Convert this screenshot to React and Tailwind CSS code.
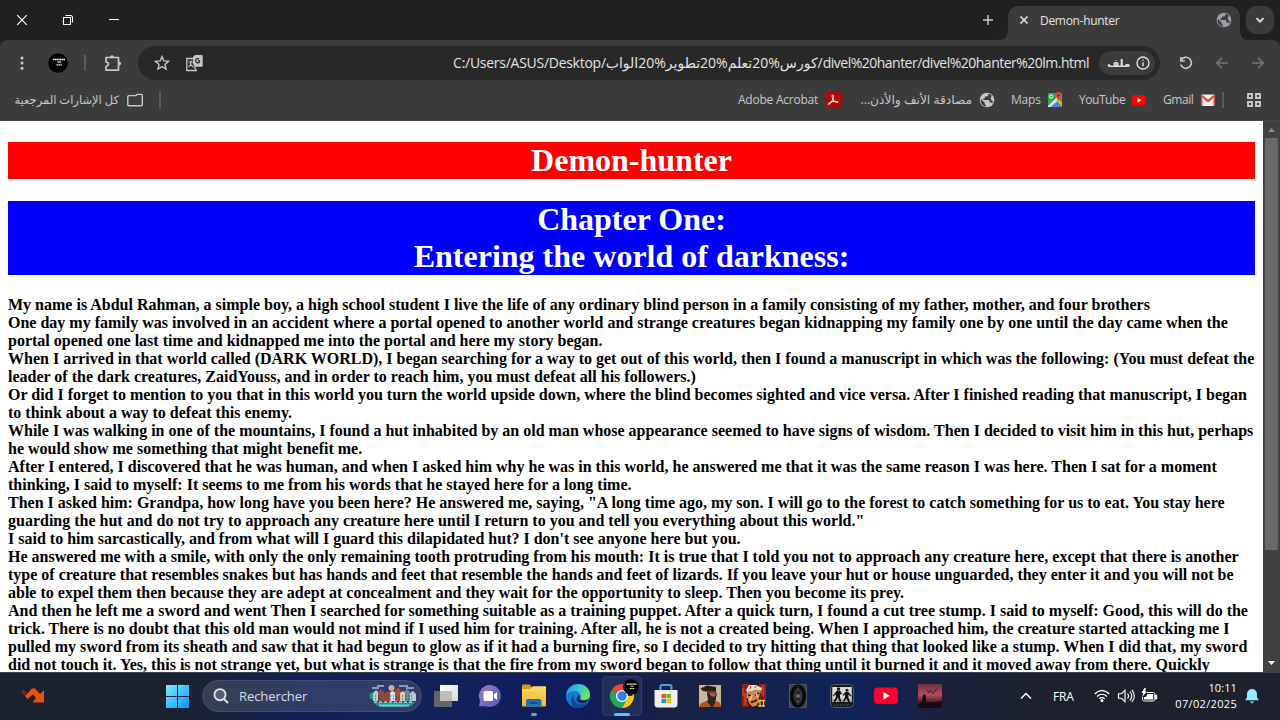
import React from "react";

const STORY = [
  "My name is Abdul Rahman, a simple boy, a high school student I live the life of any ordinary blind person in a family consisting of my father, mother, and four brothers",
  "One day my family was involved in an accident where a portal opened to another world and strange creatures began kidnapping my family one by one until the day came when the",
  "portal opened one last time and kidnapped me into the portal and here my story began.",
  "When I arrived in that world called (DARK WORLD), I began searching for a way to get out of this world, then I found a manuscript in which was the following: (You must defeat the",
  "leader of the dark creatures, ZaidYouss, and in order to reach him, you must defeat all his followers.)",
  "Or did I forget to mention to you that in this world you turn the world upside down, where the blind becomes sighted and vice versa. After I finished reading that manuscript, I began",
  "to think about a way to defeat this enemy.",
  "While I was walking in one of the mountains, I found a hut inhabited by an old man whose appearance seemed to have signs of wisdom. Then I decided to visit him in this hut, perhaps",
  "he would show me something that might benefit me.",
  "After I entered, I discovered that he was human, and when I asked him why he was in this world, he answered me that it was the same reason I was here. Then I sat for a moment",
  "thinking, I said to myself: It seems to me from his words that he stayed here for a long time.",
  "Then I asked him: Grandpa, how long have you been here? He answered me, saying, \"A long time ago, my son. I will go to the forest to catch something for us to eat. You stay here",
  "guarding the hut and do not try to approach any creature here until I return to you and tell you everything about this world.\"",
  "I said to him sarcastically, and from what will I guard this dilapidated hut? I don't see anyone here but you.",
  "He answered me with a smile, with only the only remaining tooth protruding from his mouth: It is true that I told you not to approach any creature here, except that there is another",
  "type of creature that resembles snakes but has hands and feet that resemble the hands and feet of lizards. If you leave your hut or house unguarded, they enter it and you will not be",
  "able to expel them then because they are adept at concealment and they wait for the opportunity to sleep. Then you become its prey.",
  "And then he left me a sword and went Then I searched for something suitable as a training puppet. After a quick turn, I found a cut tree stump. I said to myself: Good, this will do the",
  "trick. There is no doubt that this old man would not mind if I used him for training. After all, he is not a created being. When I approached him, the creature started attacking me I",
  "pulled my sword from its sheath and saw that it had begun to glow as if it had a burning fire, so I decided to try hitting that thing that looked like a stump. When I did that, my sword",
  "did not touch it. Yes, this is not strange yet, but what is strange is that the fire from my sword began to follow that thing until it burned it and it moved away from there. Quickly",
];

function Svg({ s = 16, box = 16, className = "", children }) {
  return (
    <svg width={s} height={s} viewBox={`0 0 ${box} ${box}`} fill="none" className={`block shrink-0 ${className}`}>
      {children}
    </svg>
  );
}

function Globe({ className }) {
  return (
    <Svg className={className}>
      <circle cx="8" cy="8" r="7.3" fill="currentColor" />
      <path d="M9.300 1.800v1.200c0 1-.8 1.600-1.800 1.600H6v1.600L4.300 6.500V8h4.900c.8 0 1.300.5 1.300 1.200v1.400h1.300c.7 0 1.200.3 1.500.9l.7-1.700-2-2.300-.3-2.300 1.400-1.300C12 2.800 10.800 2 9.300 1.800Z" fill="#3c3c3c" />
      <path d="M1.900 7 5.700 10.800v.8c0 .8.600 1.300 1.300 1.300v1.500C4 14 1.700 11.500 1.700 8.500Z" fill="#3c3c3c" />
    </Svg>
  );
}

function Avatar({ className = "" }) {
  return (
    <svg viewBox="0 0 20 20" className={`block shrink-0 ${className}`}>
      <circle cx="10" cy="10" r="9.800" fill="#000" />
      <path d="M5 6.500h12" stroke="#eee" strokeWidth="1.600" strokeDasharray="1.500 .25" />
      <path d="M9.500 9h4M8.500 11.800h5.500" stroke="#ddd" strokeWidth="1.300" strokeDasharray="1.700 .25" />
    </svg>
  );
}

function TabStrip() {
  return (
    <div className="flex h-10 bg-[#1f2120] text-white">
      <div className="ml-[15px] flex items-center gap-8">
        <Svg s={14} box={14}><path d="m2.200 2.200 9.600 9.600m0-9.600-9.600 9.600" stroke="#fff" strokeWidth="1.200" /></Svg>
        <Svg s={14} box={14}><path d="M2.500 4.500h7v7h-7zM4.500 2.500h5.200a1.800 1.800 0 0 1 1.800 1.800v5.200" stroke="#fff" strokeWidth="1.100" /></Svg>
        <Svg s={14} box={14}><path d="M2 6.500h10" stroke="#fff" strokeWidth="1" /></Svg>
      </div>
      <div className="flex-1" />
      <div className="mr-[3px] flex w-4 items-center"><Svg><path d="M8 3v10M3 8h10" stroke="#c7c7c7" strokeWidth="1.500" /></Svg></div>
      <svg width="9" height="10" viewBox="0 0 9 10" className="mt-[30px] block"><path d="M0 10C6 10 9 6 9 0v10Z" fill="#3c3c3c" /></svg>
      <div className="mt-1.5 flex w-[232px] items-center rounded-t-[10px] bg-[#3c3c3c] pb-[6px]">
        <Svg className="ml-2"><path d="m4.500 4.500 7 7m0-7-7 7" stroke="#e3e3e3" strokeWidth="1.600" /></Svg>
        <span className="ml-2 flex-1 pt-px whitespace-nowrap font-['Open_Sans','Noto_Sans',sans-serif] text-[12px] leading-4 tracking-[-0.300px] text-[#e3e3e3]">Demon-hunter</span>
        <Globe className="mr-2 text-[#9aa0a6]" />
      </div>
      <svg width="6" height="10" viewBox="0 0 6 10" className="mt-[30px] block"><path d="M6 10C2 9 0 6 0 0v10Z" fill="#3c3c3c" /></svg>
      <div className="mt-1.5 mr-1.5 flex size-7 items-center justify-center rounded-[10px] bg-[#3c3c3c]">
        <Svg><path d="m4.500 6.200 3.500 3.500 3.500-3.500" stroke="#e3e3e3" strokeWidth="1.700" /></Svg>
      </div>
    </div>
  );
}

function Toolbar() {
  return (
    <div className="bg-[#1f2120]">
      <div className="flex h-[45px] items-center rounded-t-lg bg-[#3c3c3c] text-[#c7c7c7]">
        <Svg className="ml-[14px]"><g fill="currentColor"><circle cx="8" cy="2.900" r="1.500" /><circle cx="8" cy="8" r="1.500" /><circle cx="8" cy="13.300" r="1.500" /></g></Svg>
        <Avatar className="ml-[18px] size-5" />
        <div className="ml-4 h-4 w-0.5 bg-[#5c5c5c]" />
        <Svg s={18} box={18} className="ml-[18px]">
          <path d="M2 3.500h12.500v12.700H2v-3.800c3.200-.5 3.200-4.100 0-4.600Z" stroke="currentColor" strokeWidth="1.700" strokeLinejoin="round" />
          <path d="M6 3.500c0-3 4-3 4 0M14.500 7.500c3.400 0 3.400 4 0 4" fill="currentColor" />
        </Svg>
        <div className="ml-4 flex h-[34px] w-[1022px] items-center rounded-full bg-[#282828]">
          <Svg className="ml-4"><path d="m8 1.600 1.850 4.350 4.650.4-3.500 3.100 1.050 4.650L8 11.650 3.950 14.100 5 9.450l-3.500-3.100 4.650-.4Z" stroke="currentColor" strokeWidth="1.400" /></Svg>
          <Svg s={18} box={18} className="ml-[15px]">
            <path d="M8 4.500H1.800v12h9.500l-2-4" stroke="currentColor" strokeWidth="1.300" />
            <path d="M3.500 8h5M6 6.500V8c0 2-1 4-2.500 5M5 9c.5 2 1.800 3 3.500 4" stroke="currentColor" strokeWidth="1.100" />
            <path d="M10 1h6.500c.8 0 1.200.4 1.200 1.200v9.300c0 .8-.4 1.200-1.200 1.200H10L8 10V3Z" fill="currentColor" />
            <path d="M14.800 6.800h-2M14.800 6.800a2.100 2.100 0 1 1-.7-1.600" stroke="#282828" strokeWidth="1.200" />
          </Svg>
          <div dir="ltr" className="flex-1 text-right whitespace-nowrap font-['Open_Sans','Noto_Sans','DejaVu_Sans',sans-serif] text-[14px] leading-5 text-[#e3e3e3]">
            <span className="tracking-[-0.270px]">C:/Users/ASUS/Desktop/</span><span className="tracking-[-0.380px]">كورس%20تعلم%20تطوير%20الواب</span><span className="tracking-[-0.510px]">/divel%20hanter/divel%20hanter%20lm.html</span>
          </div>
          <div className="mr-[5px] ml-[10px] flex h-6 w-14 items-center justify-between rounded-full bg-[#3c3c3c] pr-[5px] pl-2">
            <span className="font-['Open_Sans','DejaVu_Sans',sans-serif] text-[10.500px] font-bold leading-4 text-[#e3e3e3]">ملف</span>
            <Svg s={14} box={14}><circle cx="7" cy="7" r="6" stroke="#e3e3e3" strokeWidth="1.300" /><path d="M7 6.200v4M7 3.500v1.300" stroke="#e3e3e3" strokeWidth="1.400" /></Svg>
          </div>
        </div>
        <div className="ml-[18px] flex w-[88px] justify-between">
          <Svg><path d="M2.900 5.500A5.500 5.500 0 1 1 2.700 9.500M2.900 2v4h4" stroke="currentColor" strokeWidth="1.700" /></Svg>
          <Svg className="text-[#777]"><path d="M14 8H3m5-5.200L2.800 8 8 13.200" stroke="currentColor" strokeWidth="1.500" /></Svg>
          <Svg className="text-[#777]"><path d="M2 8h11M8 2.800 13.200 8 8 13.200" stroke="currentColor" strokeWidth="1.500" /></Svg>
        </div>
      </div>
    </div>
  );
}

const BM = "whitespace-nowrap font-['Open_Sans','Noto_Sans','DejaVu_Sans',sans-serif] leading-4";

function Bookmarks() {
  return (
    <div className="flex h-9 items-center border-b border-[#494949] bg-[#3c3c3c] pb-[6px] text-[#c7c7c7]">
      <span dir="rtl" className={`${BM} ml-[14px] w-[105px] text-[11.500px]`}>كل الإشارات المرجعية</span>
      <Svg className="ml-2"><path d="M.8 12.800V4.700c0-.7.4-1.100 1-1.100h7l1.500-1.200h4c.6 0 1 .4 1 1.100v9.300c0 .7-.4 1-1 1H1.800c-.6 0-1-.3-1-1Z" stroke="currentColor" strokeWidth="1.400" /></Svg>
      <div className="ml-4 h-4 w-0.5 bg-[#5c5c5c]" />
      <div className="flex-1" />
      <span className={`${BM} w-[80px] text-[12px] tracking-[-0.240px]`}>Adobe Acrobat</span>
      <Svg className="ml-[7px]"><rect width="16" height="16" rx="2.500" fill="#b30b00" /><path d="M7.600 3c2 0 .8 5-3 9-1.800 1.500-2-.5.500-1.600 2.500-1.100 7-1.600 8-.4.7 1-3.200.7-4.600-1.500C7.300 6.600 6.600 3 7.600 3Z" stroke="#fff" strokeWidth="1" /></Svg>
      <span dir="rtl" className={`${BM} ml-[19px] w-[112px] text-[12.200px]`}>مصادقة الأنف والأذن...</span>
      <Globe className="ml-[7px] text-[#c7c7c7]" />
      <span className={`${BM} ml-4 w-[29px] text-[12px] tracking-[-0.200px]`}>Maps</span>
      <Svg className="ml-[7px]">
        <rect x="1" y="1" width="14" height="14" rx="1" fill="#35a853" />
        <path d="M1.500 15 8 8l6.500 7Z" fill="#4b86ef" /><path d="m1 14 9-9 2 2.500L3.500 15H1Z" fill="#e8e8e8" /><path d="m9 8 2-1.500L15 11v3.500Z" fill="#fbbc04" />
        <circle cx="4.200" cy="4.600" r="1.600" stroke="#fff" /><path d="M11.500 0C9 0 8.300 1.800 8.300 3.200c0 2 2.700 3.200 3.200 6 .5-2.800 3.300-4 3.300-6C14.800 1.300 13.500 0 11.500 0Z" fill="#df4738" /><circle cx="11.500" cy="3.200" r="1.200" fill="#842d24" />
      </Svg>
      <span className={`${BM} ml-4 w-[46px] text-[12px] tracking-[-0.450px]`}>YouTube</span>
      <Svg className="ml-[6px]"><rect x="1" y="3" width="14" height="10.500" rx="2.500" fill="#f00" /><path d="m6.500 6 4 2.200-4 2.300Z" fill="#fff" /></Svg>
      <span className={`${BM} ml-4 w-[30px] text-[12px] tracking-[-0.420px]`}>Gmail</span>
      <Svg className="ml-[7px]"><rect x="1" y="2.500" width="14" height="11.500" rx="1" fill="#eee" /><path d="m2 4 6 5 6-5" stroke="#df4436" strokeWidth="2.200" /><path d="M1.800 3v11M14.200 3v11" stroke="#df4436" strokeWidth="1.400" /></Svg>
      <div className="ml-[6px] h-4 w-0.5 bg-[#5c5c5c]" />
      <Svg className="mr-[18px] ml-[22px]"><path d="M2 2h4v4H2zM10 2h4v4h-4zM2 10h4v4H2zM10 10h4v4h-4z" stroke="currentColor" strokeWidth="1.900" /></Svg>
    </div>
  );
}

function Page() {
  return (
    <div className="flex h-[551px] bg-white">
      <main className="w-[1263px] overflow-hidden px-2 pt-[21px] font-['Liberation_Serif',serif] font-bold">
        <h1 className="h-[37px] bg-[#f00] text-center text-[32px] leading-[37px] text-white">Demon-hunter</h1>
        <h2 className="mt-[22px] h-[74px] bg-[#00f] text-center text-[32px] leading-[37px] text-white">Chapter One:<br />Entering the world of darkness:</h2>
        <div className="mt-[21px] text-[16px] leading-[18px] text-black">
          {STORY.map((line) => <p key={line} className="whitespace-nowrap">{line}</p>)}
        </div>
      </main>
      <div className="flex w-[17px] flex-col items-center bg-[#424242]">
        <svg width="17" height="17" viewBox="0 0 17 17" className="block"><path d="m5 11 3.500-4 3.500 4Z" fill="#8b8b8b" /></svg>
        <div className="h-[412px] w-[13px] bg-[#686868]" />
        <div className="flex-1" />
        <svg width="17" height="17" viewBox="0 0 17 17" className="block"><path d="m5 6 3.500 4L12 6Z" fill="#fff" /></svg>
      </div>
    </div>
  );
}

function Cell({ children, className = "" }) {
  return <div className={`flex h-10 w-11 shrink-0 items-center justify-center ${className}`}>{children}</div>;
}

function CityArt() {
  return (
    <svg width="50" height="26" viewBox="0 0 50 26" className="mr-[2px] block">
      <path d="M4 19h42l-4 4-8 1H16l-8-1Z" fill="#2a8f9a" />
      <path d="M10 22.500h30" stroke="#64d3bd" strokeWidth="2" />
      <path d="M3 5h7M8 3h7M30 3h9M37 5h8" stroke="#a1bed1" strokeWidth="1.300" />
      <circle cx="22.500" cy="5" r="3" fill="#cdb38c" />
      <ellipse cx="3" cy="13" rx="2.500" ry="3.500" fill="#19a07a" />
      <path d="M4 18V10l3-3 3 3v8Z" fill="#b9cbd5" /><path d="M9 18V9l3-3 3 3v9Z" fill="#884c44" />
      <path d="M15 18v-7l4-3 3 3v7Z" fill="#a44539" /><path d="M21 18V9l3-1 3 2v8Z" fill="#d7e4e5" />
      <path d="M26 18V8l3-4 3 4v10Z" fill="#ab4c3c" /><path d="M31 18V10l3-2 3 2v8Z" fill="#dbc6b7" />
      <path d="M36 18V8l2-2 3 3v9Z" fill="#6787a1" /><path d="M41 18v-8l3-2 3 3v7Z" fill="#b9c9d3" />
      <path d="M6 13h39M6 16h39" stroke="#344462" strokeDasharray="1 2" />
      <path d="M5 19h40" stroke="#e3f2ed" strokeDasharray="3 2" />
    </svg>
  );
}

function TaskIcons() {
  return (
    <>
      <Cell><Svg s={26} box={26}><defs><linearGradient id="tv" x1="0" y1="0" x2="1" y2="1"><stop stopColor="#fff" /><stop offset="1" stopColor="#d9d9d9" /></linearGradient></defs><path d="M1 8h18v16H1z" fill="#666" /><path d="M7 2h18v16H7z" fill="url(#tv)" /><path d="M7 8h12v10H7z" fill="#bdbdbd" /></Svg></Cell>
      <Cell><Svg s={24} box={24}><defs><linearGradient id="ch" x1="0" y1="0" x2="1" y2="1"><stop stopColor="#a57aba" /><stop offset="1" stopColor="#4f57c7" /></linearGradient></defs><path d="M12.500 1A11 11 0 1 1 8 22.300H1l1-5.500A11 11 0 0 1 12.500 1Z" fill="url(#ch)" /><rect x="5.500" y="7" width="9.500" height="10" rx="1.500" fill="#fff" /><path d="m16 10.500 3-2.500v8l-3-2.500Z" fill="#fff" /></Svg></Cell>
      <Cell className="relative"><Svg s={26} box={26}><defs><linearGradient id="fo" x1="0" y1="0" x2="0" y2="1"><stop stopColor="#ffd967" /><stop offset="1" stopColor="#f6b52c" /></linearGradient></defs><path d="M1 3c0-1 .5-1.500 1.500-1.500h6L11 4v3H1Z" fill="#d99b12" /><path d="M1 6h8l3-2.700h13V22c0 1-.5 1.500-1.500 1.500h-21C1.500 23.500 1 23 1 22Z" fill="url(#fo)" /><path d="M5 23.500V18c0-1 .8-2 2-2h11.500c1 0 2 1 2 2v5.500Z" fill="#1673c1" /><path d="M9 20h8" stroke="#0c4f93" strokeWidth="2" /></Svg><span className="absolute bottom-0 h-[3px] w-1.5 rounded-full bg-[#9299ad]" /></Cell>
      <Cell><Svg s={26} box={26}><defs><linearGradient id="ed" x1="0" y1="0" x2="1" y2=".5"><stop stopColor="#168fde" /><stop offset=".5" stopColor="#35bfe1" /><stop offset="1" stopColor="#72e661" /></linearGradient></defs><circle cx="13" cy="13" r="12" fill="#157cd4" /><path d="M1.200 11C3 4 8 1 13 1c7 0 12 5 12 10.500 0 4-3 5.500-6.500 5.500-2.500 0-4-.8-3.500-2 2-3.500-1-7-5-7-4 0-7 1.500-8.800 4Z" fill="url(#ed)" /><path d="M9 12c-1 6 3 10 9 9 2.400-.4 4-1.500 4.500-1C20 24 15.500 25.500 11.500 25 4.500 24 4 15.500 9 12Z" fill="#114a98" /><path d="M14.500 12c1.500 1.500.5 2.800.4 3.600.5 2.400 5.600 2.600 9 .4-1 4-7 5.500-10.400 3.500-3-1.700-2.500-5.500 1-7.500Z" fill="#152261" /></Svg></Cell>
      <Cell className="relative">
        <div className="absolute inset-x-[2px] inset-y-0 rounded-[4px] border border-[#303a65] bg-[#232d59]" />
        <Svg s={26} box={26} className="relative"><path d="M13 13 2.600 7A12 12 0 0 1 23.400 7Z" fill="#e94435" /><path d="M13 13 2.600 7A12 12 0 0 0 13 25l5-9Z" fill="#24a653" /><path d="M13 13h10.400V7A12 12 0 0 1 13 25l5-9Z" fill="#fbc316" /><circle cx="13" cy="13" r="6" fill="#fff" /><circle cx="13" cy="13" r="4.800" fill="#347fed" /></Svg>
        <Avatar className="absolute top-[3px] left-[23px] size-4" />
        <span className="absolute bottom-0 h-[3px] w-4 rounded-full bg-[#54c4ff]" />
      </Cell>
      <Cell><Svg s={24} box={24}><path d="M.5 6h23v14.500c0 2-1.500 3-3 3h-17c-1.500 0-3-1-3-3Z" fill="#efefef" /><path d="M6.500 6V2.500c0-1 .5-1.500 1.500-1.500h8c1 0 1.500.5 1.500 1.500V6" stroke="#31aee8" strokeWidth="2" /><path d="M7.500 10H12v4.300H7.500z" fill="#f05125" /><path d="M12.500 10H17v4.300h-4.500z" fill="#7eb900" /><path d="M7.500 15H12v4H7.500z" fill="#00a4ef" /><path d="M12.500 15H17v4h-4.500z" fill="#ffb900" /></Svg></Cell>
      <Cell><Svg s={24} box={24}><rect x=".5" y=".5" width="23" height="23" fill="#c8b59e" stroke="#262029" /><path d="M2.500 4.500 9 1.500l9 1.500v4l-4 1.500-9-1.500Z" fill="#271b19" /><path d="M9 7h9l1 4-2 5-5-1-3-4Z" fill="#654034" /><path d="m9 8 1 8-3 3 5 3 6-6v-4l-4 1Z" fill="#33211d" /><path d="m12 9 5 .5v3L13 12Z" fill="#9d6a4e" /><path d="M1 23c1-4 4-5 8-6l5 4 5-4c3 1 4 3 4 6Z" fill="#aa5522" /><path d="m10 17 4 5 3-5" stroke="#301c18" strokeWidth="2" /></Svg></Cell>
      <Cell><Svg s={24} box={24}><path fill="#36120e" d="M0 0h24v24H0z" /><path d="M0 0h8L5 10 7 23H0ZM17 0h7v20l-5-8Z" fill="#941f1c" /><path d="m5 6 10-2 5 5-2 8-4 5-5 1-5-6Z" fill="#ce8352" /><path d="m4 6 3-5h7l6 3-1 3-5-1.500-9 2.500Z" fill="#e6dfcf" /><path d="m6 11 4 1m3-1 4-2M9 18.500l6-2.500" stroke="#381009" strokeWidth="1.800" /><path d="m10 11-2 5m6-7 2 4" stroke="#ffd096" strokeWidth="1.500" /><path d="m8 5 1-3m4 2 1-2" stroke="#b64035" /><path d="M5 14c0 4 2 7 5 9M19 9l-2 8" stroke="#4a160f" strokeWidth="1.500" /><path d="M1 4v8m2-3v12M21 1v10" stroke="#d9602f" /><path d="M16 16.500h7M18 17v5m3.500-5v5M16 22h7" stroke="#edc14e" strokeWidth="1.400" /></Svg></Cell>
      <Cell><Svg s={24} box={24}><path d="M3.500.5h17v23h-17z" fill="#3e4248" stroke="#50535c" /><ellipse cx="12" cy="12" rx="6.500" ry="10" fill="#202326" stroke="#070808" strokeWidth="3" /><ellipse cx="12" cy="12" rx="3" ry="6" stroke="#494b4a" /><circle cx="12" cy="12" r="2" fill="#716f5c" /><path d="M12 2v6m0 8v6" stroke="#606265" strokeDasharray="1 1" /></Svg></Cell>
      <Cell><Svg s={24} box={24}><rect x=".5" y=".5" width="23" height="23" rx="4" fill="#17191c" stroke="#555961" /><path d="M2 3h20v15H2z" fill="#a4a8aa" /><path d="M3 3h18v12H3z" fill="#d6d8d8" /><path d="M7 6.500h3l2 3.500-2 .5v3l1.500 4.500-2-.5-1.500-4-3 4.500-1.500-.5L6 13l-.5-3-2 2.500-.5-1Z" fill="#0b0d0e" /><circle cx="8.500" cy="4.800" r="1.600" fill="#111" /><path d="M15.500 8h3l3 4-1 .5-2-2v3L20 18l-1.500.5-2-4-2.500 3.500-1-.5 2-4.500v-2.500l-2 1.500-.5-1Z" fill="#111" /><circle cx="17" cy="6.300" r="1.500" fill="#111" /><path d="M4 21h16" stroke="#50545a" strokeDasharray="2 1" /></Svg></Cell>
      <Cell><Svg s={24} box={24}><rect y="3.500" width="24" height="16.500" rx="4" fill="#f03" /><path d="m9.500 8 6.200 3.700-6.200 3.800Z" fill="#fff" /></Svg></Cell>
      <Cell><Svg s={24} box={24}><defs><linearGradient id="rd" x1="0" y1="0" x2="0" y2="1"><stop stopColor="#6d2f3c" /><stop offset=".45" stopColor="#b64d5d" /><stop offset=".75" stopColor="#511e28" /><stop offset="1" stopColor="#120a12" /></linearGradient></defs><path fill="url(#rd)" d="M0 0h24v24H0z" /><path d="m9 5 2 4 2-3 2 4 4-6" stroke="#4a1d2a" /><path d="m5 11 2-1 1 3v6l2 4H2l2-6Z" fill="#1f0d16" /><path d="M0 20c6-3 15-1 24-3v7H0Z" fill="#170c14" /></Svg></Cell>
    </>
  );
}

function Taskbar() {
  return (
    <div className="h-12 border-t border-[#3d424e] bg-[linear-gradient(90deg,#1b222d_0px,#1b222d_170px,#122153_300px,#13215a_440px,#101c5c_580px,#192145_670px,#10235a_855px,#1b213a_945px,#1c212d_1040px,#1c212d_1280px)] font-['Open_Sans','Noto_Sans',sans-serif]">
      <div className="flex h-[46px] items-center">
        <svg width="24" height="16" viewBox="0 0 24 16" className="ml-[21px] block"><path d="M0 4 2 1.500 5 4l-1 4Z" fill="#84231b" /><path d="M4 8 11 .5h3L19 6l3-3h1v11.500H12v-1l3-3.500-3-3.500L6.500 11Z" fill="#e65310" /></svg>
        <Svg s={24} box={24} className="ml-[120px]"><defs><linearGradient id="wi" x1="0" y1="0" x2="24" y2="24" gradientUnits="userSpaceOnUse"><stop stopColor="#82edff" /><stop offset="1" stopColor="#0795ff" /></linearGradient></defs><path d="M1 1h11v11H1zM13 1h11v11H13zM1 13h11v11H1zM13 13h11v11H13z" fill="url(#wi)" /></Svg>
        <div className="mr-0.5 ml-[13px] flex h-8 w-[220px] items-center rounded-full border border-[#46516f] bg-[linear-gradient(90deg,#363e51,#303e69_50%,#323b6a)]">
          <Svg s={18} box={18} className="ml-[9px]"><circle cx="8" cy="7.700" r="5.600" fill="#555e72" stroke="#e3e6ed" strokeWidth="1.800" /><path d="m12 12 4 4" stroke="#e3e6ed" strokeWidth="1.800" /></Svg>
          <span className="ml-[9px] flex-1 text-[13px] leading-5 tracking-[-0.080px] text-[#d8dce7]">Rechercher</span>
          <CityArt />
        </div>
        <TaskIcons />
        <div className="flex-1" />
        <Svg><path d="m3 10.500 5-5 5 5" stroke="#fff" strokeWidth="1.500" /></Svg>
        <span className="ml-[19px] w-[22px] pt-px text-[12px] leading-4 tracking-[-0.200px] text-white">FRA</span>
        <Svg className="ml-[19px]"><path d="M.8 6C5 1.500 11 1.500 15.200 6M3 8.500c3-3 7-3 10 0M5.200 10.800c1.700-1.700 3.900-1.700 5.600 0" stroke="#fff" strokeWidth="1.200" /><circle cx="8" cy="12.500" r="1.500" fill="#fff" /></Svg>
        <Svg s={18} box={18} className="ml-[7px]"><path d="M1.500 6.800h3L8 3.300v11.400l-3.500-3.500h-3ZM10.500 6.500c1.300 1.500 1.300 3.500 0 5M12.700 4.500c2.600 2.800 2.600 6.200 0 9M14.800 3c3.400 3.500 3.400 8.500 0 12" stroke="#fff" strokeWidth="1.100" /></Svg>
        <Svg s={18} box={18} className="ml-[5px]"><path d="M7 5.500h6c1 0 1.800.7 1.800 1.800v5c0 1.100-.7 1.700-1.800 1.700H4.300c-1.100 0-1.800-.6-1.800-1.700V10M15.500 8v4h1.200V8Z" stroke="#fff" strokeWidth="1" /><path d="M7.500 7h5.800v5.500H4V10h2Z" fill="#fff" /><path d="m4.500 1-3 5h2L2 10l5-5.500H5L6 1Z" fill="#fff" /></Svg>
        <div className="ml-[17px] flex w-[62px] flex-col items-end text-[11px] leading-4 whitespace-nowrap text-white"><span className="tracking-[0.100px]">10:11</span><span className="tracking-[0.330px]">07/02/2025</span></div>
        <Svg className="mr-5 ml-[7px]"><path d="M8 1a5 5 0 0 0-5 5v3.500l-1.500 2v.8h13v-.8l-1.500-2V6a5 5 0 0 0-5-5ZM5.700 13.500h4.600L8 15.500Z" fill="#96eaff" /></Svg>
      </div>
    </div>
  );
}

export default function App() {
  return (
    <div className="h-[720px] w-[1280px] overflow-hidden bg-[#3c3c3c]">
      <TabStrip />
      <Toolbar />
      <Bookmarks />
      <Page />
      <Taskbar />
    </div>
  );
}
